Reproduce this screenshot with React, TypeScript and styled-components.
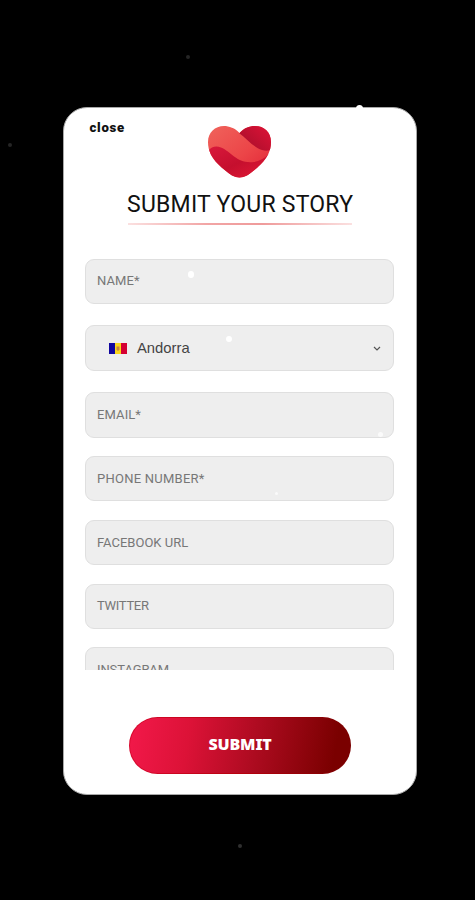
import React from "react";
import styled, { createGlobalStyle } from "styled-components";

const GlobalStyle = createGlobalStyle`
  * { box-sizing: border-box; }
  body { margin: 0; background: #000; }
`;

const Page = styled.main`
  position: relative;
  width: 475px;
  height: 900px;
  padding: 107px 0 0 63px;
  overflow: hidden;
  background: #000;
  font-family: Roboto, "Noto Sans", sans-serif;
`;

const Card = styled.section`
  display: flex;
  flex-direction: column;
  width: 354px;
  height: 688px;
  padding: 0 21px;
  border: 1px solid #a8a8a8;
  border-radius: 24px;
  background: #fff;
`;

const Header = styled.header`
  display: flex;
  flex-direction: column;
  height: 150.6px;
`;

const CloseButton = styled.button`
  align-self: flex-start;
  height: 16px;
  margin: 12px 0 0 4.5px;
  padding: 0;
  border: 0;
  background: none;
  color: #111;
  font: 900 13.2px/16px Roboto, sans-serif;
  letter-spacing: 0.7px;
`;

const Heart = styled.svg`
  width: 65px;
  height: 54px;
  margin: -11px 0 0 122px;
`;

const Title = styled.h1`
  align-self: flex-start;
  margin: 11px 0 0 42px;
  color: #111;
  font-size: 23px;
  font-weight: 400;
  line-height: 30px;
  letter-spacing: 0.23px;
  white-space: nowrap;
`;

const Rule = styled.div`
  width: 224px;
  height: 2px;
  margin: 3px 0 0 43px;
  background: linear-gradient(90deg, #fbe0e0, #f2a5a5 35%, #ef9b9b 60%, #fbe0e0);
`;

const Form = styled.form`
  display: flex;
  flex-direction: column;
  gap: 18.3px;
  height: 411.4px;
  overflow: hidden;
`;

const Field = styled.div<{ $spaced?: boolean }>`
  display: flex;
  flex: none;
  align-items: center;
  width: 309px;
  height: 45.5px;
  margin-bottom: ${({ $spaced }) => ($spaced ? "3px" : "0")};
  padding: 0 11px;
  border: 1px solid #dfdfdf;
  border-radius: 9px;
  background: #eee;
`;

const Label = styled.span<{ $tracking: number }>`
  color: #777;
  font-size: 13px;
  line-height: 18px;
  letter-spacing: ${({ $tracking }) => $tracking}px;
  white-space: nowrap;
`;

const Flag = styled.svg`
  width: 18px;
  height: 11px;
  margin-left: 12px;
`;

const Country = styled.span`
  flex: 1;
  margin-left: 10px;
  color: #444;
  font: 14.8px/20px "Liberation Sans", Arial, sans-serif;
`;

const Chevron = styled.svg`
  width: 8px;
  height: 5px;
  margin-right: 1.5px;
`;

const Submit = styled.button`
  width: 222px;
  height: 57px;
  margin: 47px 0 0 44px;
  padding: 0 0 2px;
  border: 1px solid transparent;
  border-radius: 29px;
  background:
    linear-gradient(100deg, #f01848 3%, #dc1237 27%, #ad0b20 57%, #7a0000 92%) padding-box,
    linear-gradient(90deg, #d9092f, #b8000c 50%, #7a0000) border-box;
  color: #fff;
  font: 900 16px/20px "Noto Sans", sans-serif;
  letter-spacing: -0.15px;
`;

const Particle = styled.i<{ $x: number; $y: number; $size: number; $color: string }>`
  position: absolute;
  left: ${({ $x }) => $x}px;
  top: ${({ $y }) => $y}px;
  width: ${({ $size }) => $size}px;
  height: ${({ $size }) => $size}px;
  border-radius: 50%;
  background: ${({ $color }) => $color};
  pointer-events: none;
`;

const particles = [
  { x: 186, y: 55, size: 4, color: "#252525" },
  { x: 8, y: 143, size: 4, color: "#252525" },
  { x: 355.5, y: 104.5, size: 7, color: "#fff" },
  { x: 187.5, y: 271, size: 6.5, color: "#fff" },
  { x: 226, y: 335.5, size: 6, color: "#fff" },
  { x: 378, y: 431.5, size: 5, color: "#fafafa" },
  { x: 275, y: 492, size: 3, color: "#fafafa" },
  { x: 237.5, y: 844, size: 4, color: "#303030" },
];

const lowerFields = [
  { text: "EMAIL*", tracking: 0.1 },
  { text: "PHONE NUMBER*", tracking: 0.25 },
  { text: "FACEBOOK URL", tracking: 0 },
  { text: "TWITTER", tracking: -0.3 },
  { text: "INSTAGRAM", tracking: -0.1 },
];

function HeartLogo() {
  return (
    <Heart viewBox="0 0 65 54" aria-hidden="true">
      <defs>
        <clipPath id="heartShape">
          <path d="M32.500 8C28 3 22 1 17 1C8 1 1 7.500 1 17C1 26 5 33 11 39C16 44 20 47 25 50.500Q32.500 54.500 40 50.500C45 47 49 44 54 39C60 33 64 26 64 17C64 7 57 1 48 1C42 1 37 3 32.500 8Z" />
        </clipPath>
        <linearGradient id="ribbon" x1="0" y1="0" x2="1" y2="1">
          <stop offset="0" stopColor="#f0645c" />
          <stop offset=".55" stopColor="#ec4548" />
          <stop offset="1" stopColor="#df2034" />
        </linearGradient>
        <linearGradient id="rightLobe" x1=".2" y1=".8" x2=".9" y2=".2">
          <stop offset="0" stopColor="#ae0f2c" />
          <stop offset="1" stopColor="#d81236" />
        </linearGradient>
        <linearGradient id="lowerLobe" x1="0" y1="0" x2="1" y2="1">
          <stop offset="0" stopColor="#d9193c" />
          <stop offset=".5" stopColor="#c50f2e" />
          <stop offset="1" stopColor="#e51a36" />
        </linearGradient>
      </defs>
      <g clipPath="url(#heartShape)">
        <path d="M0 0H65V54H0Z" fill="url(#ribbon)" />
        <path d="M32 8L42 0H65V24Q61 27 55 25C46 22 40 14 32 8Z" fill="url(#rightLobe)" />
        <path d="M0 27Q6 19 14 22.500C25 27 30 39 47 37Q55 36 63 28L56 54H0Z" fill="url(#lowerLobe)" />
      </g>
    </Heart>
  );
}

export default function App() {
  return (
    <>
      <GlobalStyle />
      <Page>
        <Card>
          <Header>
            <CloseButton type="button">close</CloseButton>
            <HeartLogo />
            <Title>SUBMIT YOUR STORY</Title>
            <Rule />
          </Header>
          <Form>
            <Field $spaced>
              <Label $tracking={0.1}>NAME*</Label>
            </Field>
            <Field $spaced>
              <Flag viewBox="0 0 18 11" aria-hidden="true">
                <path d="M0 0H6V11H0Z" fill="#10069f" />
                <path d="M6 0H12V11H6Z" fill="#f9d51c" />
                <path d="M12 0H18V11H12Z" fill="#d50032" />
                <path d="M7.500 3.500H10.500V6.500Q9 9 7.500 6.500Z" fill="#c58142" />
              </Flag>
              <Country>Andorra</Country>
              <Chevron viewBox="0 0 8 5" aria-hidden="true">
                <path d="M1 1L4 4L7 1" fill="none" stroke="#555" strokeWidth="1.2" />
              </Chevron>
            </Field>
            {lowerFields.map(({ text, tracking }) => (
              <Field key={text}>
                <Label $tracking={tracking}>{text}</Label>
              </Field>
            ))}
          </Form>
          <Submit type="button">SUBMIT</Submit>
        </Card>
        {particles.map(({ x, y, size, color }) => (
          <Particle key={`${x}-${y}`} $x={x} $y={y} $size={size} $color={color} />
        ))}
      </Page>
    </>
  );
}
